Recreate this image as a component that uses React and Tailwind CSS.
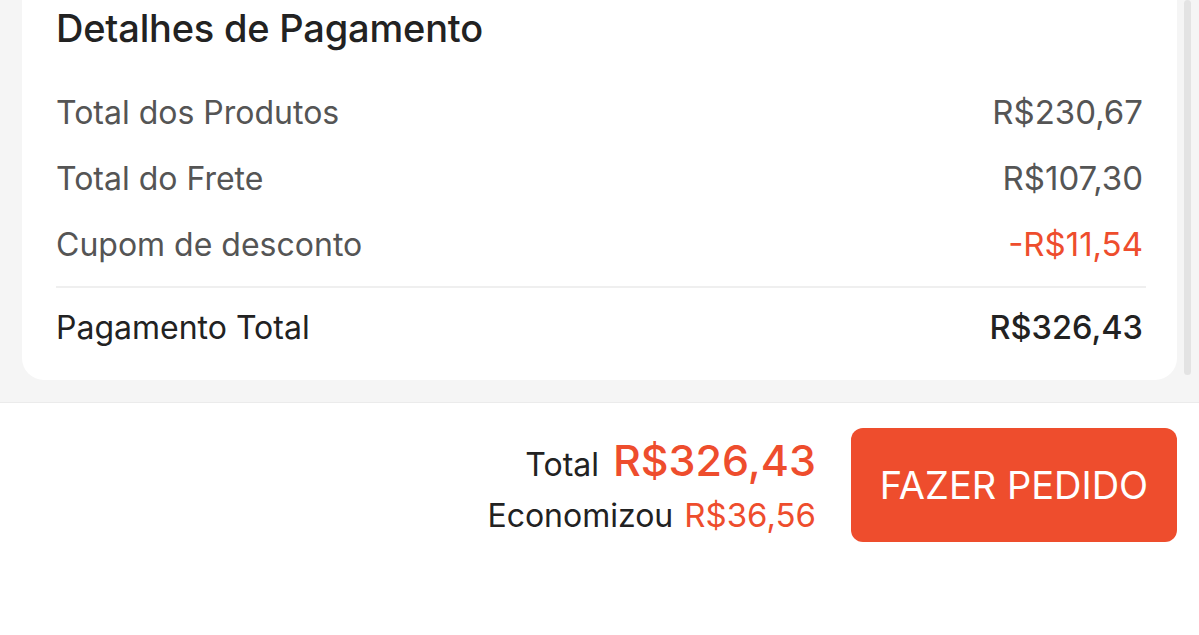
const rows = [
  { label: 'Total dos Produtos', value: 'R$230,67' },
  { label: 'Total do Frete', value: 'R$107,30' },
  { label: 'Cupom de desconto', value: '-R$11,54', accent: true },
]

const font = { fontFamily: 'Inter, "Noto Sans", sans-serif' }

const App = () => {
  return (
    <div className="w-[1199px] h-[635px] bg-white overflow-hidden relative" style={font}>
      {/* upper scroll area */}
      <div className="bg-[#f5f5f5] px-[22px] h-[402px] relative">
        <div className="bg-white rounded-b-[22px] px-[34px] pb-[19px] h-[380px] flex flex-col">
          <div className="h-[56px] flex items-center">
            <h2 className="text-[38px] font-medium text-[#222] tracking-[-0.2px]">Detalhes de Pagamento</h2>
          </div>
          <div className="mt-[24px]">
            {rows.map(r => (
              <div key={r.label} className="h-[66px] flex items-center justify-between text-[32px] text-[#555]">
                <span>{r.label}</span>
                <span className={r.accent ? 'text-[#ee4d2d] text-[33px]' : 'text-[33px]'}>{r.value}</span>
              </div>
            ))}
          </div>
          <div className="mt-[8px] h-[2px] bg-[#efefef] mr-[-3px]" />
          <div className="mt-[7px] h-[66px] flex items-center justify-between text-[32px] text-[#222]">
            <span>Pagamento Total</span>
            <span className="font-medium text-[32.5px]">R$326,43</span>
          </div>
        </div>
        <div className="absolute right-[8px] top-0 w-[7px] h-[375px] rounded-full bg-[#e3e3e3]" />
      </div>

      {/* footer bar */}
      <div className="border-t border-[#ebebeb] flex justify-end items-center pt-[25px] pr-[22px]">
        <div className="flex flex-col items-end mr-[35px] mt-[1px]">
          <div className="flex items-baseline gap-[14px] leading-none">
            <span className="text-[32px] text-[#222]">Total</span>
            <span className="text-[43px] font-medium text-[#ee4d2d]">R$326,43</span>
          </div>
          <div className="flex items-baseline gap-[11px] mt-[17px] leading-none">
            <span className="text-[32px] text-[#222]">Economizou</span>
            <span className="text-[33px] text-[#ee4d2d]">R$36,56</span>
          </div>
        </div>
        <button className="w-[326px] h-[114px] rounded-[12px] bg-[#ee4d2d] text-white text-[38px] font-normal">
          FAZER PEDIDO
        </button>
      </div>
    </div>
  )
}

export default App
